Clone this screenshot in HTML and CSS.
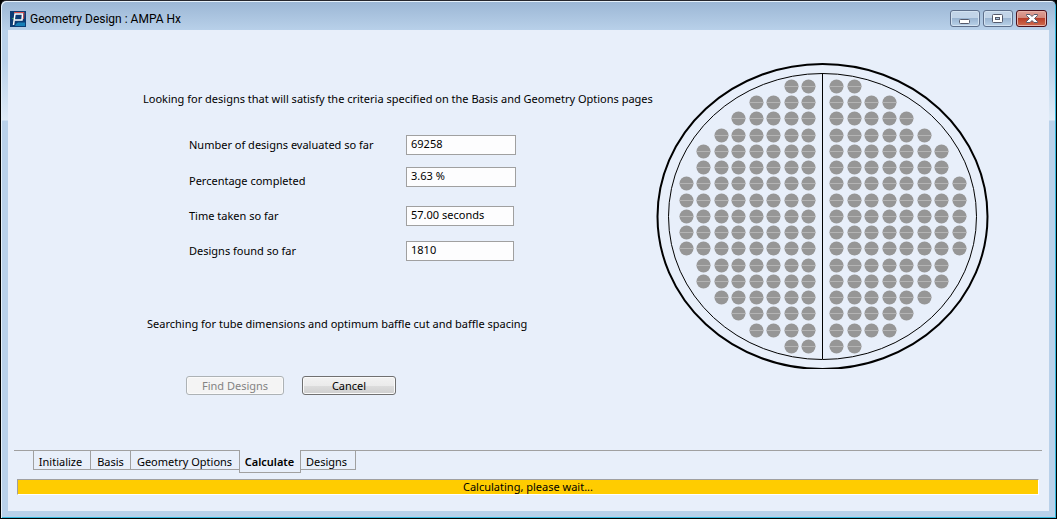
FILE: index.html
```html
<!DOCTYPE html>
<html lang="en">
<head>
<meta charset="utf-8">
<title>Geometry Design : AMPA Hx</title>
<link rel="stylesheet" href="styles.css">
</head>
<body>
<div class="window">
  <header class="titlebar">
    <svg class="logo" width="16" height="16" viewBox="0 0 16 16" aria-hidden="true">
      <rect width="16" height="16" fill="#0c3c74"/>
      <path d="M6 13L8 11.500H15V15H5Z" fill="#1780b8"/>
      <path d="M2 7.500H5" stroke="#2f9f62" stroke-width="1"/>
      <path d="M3.500 14L5 3H12.500L12 9H5" fill="none" stroke="#fff" stroke-width="1.500"/>
      <path d="M4 1.500H14L13.500 8" fill="none" stroke="#d8504c" stroke-width="1"/>
    </svg>
    <h1 class="title">Geometry Design : AMPA Hx</h1>
    <div class="controls">
      <button class="control" aria-label="Minimize">
        <svg width="12" height="12" viewBox="0 0 12 12"><rect x=".5" y="6.500" width="10" height="4" rx="1" fill="#fff" stroke="#555a6c"/></svg>
      </button>
      <button class="control" aria-label="Maximize">
        <svg width="12" height="12" viewBox="0 0 12 12"><rect x=".5" y="1.500" width="10" height="8" rx="1" fill="#fff" stroke="#555a6c"/><rect x="3.500" y="4.500" width="4" height="2" fill="#a8c3dd" stroke="#555a6c"/></svg>
      </button>
      <button class="control control-close" aria-label="Close">
        <svg width="12" height="12" viewBox="0 0 12 12"><path d="M.5 1.500H4L6 3.500 8 1.500H11.500V2.500L8.500 5.500 11.500 8.500V9.500H8L6 7.500 4 9.500H.5V8.500L3.500 5.500.5 2.500Z" fill="#fff" stroke="#555a6c"/></svg>
      </button>
    </div>
  </header>

  <main class="page">
    <div class="content">
      <form class="progress-form">
        <p class="intro">Looking for designs that will satisfy the criteria specified on the Basis and Geometry Options pages</p>
        <div class="fields">
          <div class="field"><label for="evaluated">Number of designs evaluated so far</label><input id="evaluated" value="69258" readonly></div>
          <div class="field field-low"><label for="percent">Percentage completed</label><input id="percent" value="3.63 %" readonly></div>
          <div class="field field-short"><label for="time">Time taken so far</label><input id="time" value="57.00 seconds" readonly></div>
          <div class="field field-short"><label for="found">Designs found so far</label><input id="found" value="1810" readonly></div>
        </div>
        <p class="searching">Searching for tube dimensions and optimum baffle cut and baffle spacing</p>
        <div class="actions">
          <button type="button" class="button button-find" disabled>Find Designs</button>
          <button type="button" class="button">Cancel</button>
        </div>
      </form>
      <svg class="tubesheet" width="333" height="307" viewBox="656 62 333 307" role="img" aria-label="Tube layout">
        <ellipse cx="822.5" cy="216.500" rx="165" ry="152.500" fill="none" stroke="#000" stroke-width="2"/>
        <ellipse cx="822.5" cy="216.500" rx="154" ry="143" fill="none" stroke="#000"/>
        <path d="M822.5 73V359" stroke="#000"/>
        <g id="tubes"></g>
      </svg>
    </div>

    <nav class="tabs" aria-label="Pages">
      <button class="tab tab-initialize">Initialize</button>
      <button class="tab tab-basis">Basis</button>
      <button class="tab tab-geometry">Geometry Options</button>
      <button class="tab tab-active" aria-current="page">Calculate</button>
      <button class="tab tab-designs">Designs</button>
    </nav>
    <div class="status" role="status">Calculating, please wait...</div>
  </main>
</div>
<script src="tubes.js"></script>
</body>
</html>
```
FILE: tubes.js
```
// Tubes per row on each side of the pass partition, top to bottom.
const rows = [2, 4, 5, 6, 7, 7, 8, 8, 8, 8, 8, 7, 7, 6, 5, 4, 2];
const group = document.getElementById("tubes");
const ns = "http://www.w3.org/2000/svg";

function add(name, attributes) {
  const node = document.createElementNS(ns, name);
  for (const key in attributes) node.setAttribute(key, attributes[key]);
  group.appendChild(node);
}

function tube(x, y) {
  add("circle", { cx: x, cy: y, r: 7, fill: "#969696" });
  add("path", { d: `M${x - 7} ${y}h14`, stroke: "#b4b4b4" });
}

rows.forEach((count, row) => {
  const y = Math.floor(86.25 + row * 16.25) + 0.5;
  for (let i = 0; i < count; i++) {
    tube(Math.floor(808.5 - i * 17.5) + 0.5, y);
    tube(Math.floor(836.5 + i * 17.5) + 0.5, y);
  }
});
```
FILE: styles.css
```css
* { box-sizing: border-box; }

body {
  margin: 0;
  background: #000;
  color: #000;
  font: 11px/20px "Noto Sans", "Open Sans", sans-serif;
}

h1, p { margin: 0; }
button, input { font: inherit; color: inherit; }

.window {
  display: flex;
  flex-direction: column;
  min-height: 100vh;
  padding: 0 7px 7px 6px;
  border: 1px solid #000;
  border-top-color: #26262c;
  border-radius: 6px 6px 0 0;
  background: linear-gradient(#9bb6d4, #b9d1ea 30px, #b9d1ea 60px, #dfebf7 119px, #b9d1ea 120px);
  box-shadow: inset 1px 1px #e6f1fa, inset -1px -1px #34b8dc;
}

.titlebar {
  display: flex;
  align-items: center;
  height: 29px;
  padding: 5px 2px 0 3px;
}
.logo { margin-top: 1px; }
.title {
  flex: 1;
  padding: 1px 0 0 4px;
  font-family: Roboto, "Noto Sans", sans-serif;
  font-size: 12px;
  font-weight: 400;
}
.controls { display: flex; gap: 3px; }
.control {
  display: flex;
  align-items: center;
  justify-content: center;
  width: 30px;
  height: 17px;
  padding: 2px 0 0;
  border: 1px solid #5e6f8b;
  border-radius: 3px;
  background: linear-gradient(#c2d4e8 50%, #9bb5d2 50%, #b9d1e8);
  box-shadow: inset 0 0 0 1px #d3e2f1;
}
.control-close {
  width: 31px;
  border-color: #4c101b;
  background: linear-gradient(#dfa198, #d08578 50%, #b93e29 50%, #cf6d4f);
  box-shadow: inset 0 0 0 1px #e7b2a8;
}

.page {
  display: flex;
  flex: 1;
  flex-direction: column;
  padding: 0 7px 16px 6px;
  background: #e8effa;
  margin-left: 1px;
}
.content {
  display: flex;
  flex: 1;
  justify-content: space-between;
  padding: 32px 53px 0 129px;
}
.tubesheet { flex: none; }

.intro { margin-top: 27px; white-space: nowrap; }
.fields { padding: 26px 0 0 46px; }
.field {
  display: grid;
  grid-template-columns: 217px 110px;
  align-items: start;
  height: 32px;
}
.field-low { height: 39px; }
.field-low label { padding-top: 4px; }
.field-short { grid-template-columns: 217px 108px; height: 35px; }
.field input {
  width: 100%;
  height: 20px;
  padding: 0 4px 3px;
  border: 1px solid #a0a0a0;
  background: #fdfdfe;
  line-height: 15px;
}
.searching { padding: 38px 0 0 4px; }
.actions { display: flex; gap: 18px; padding: 42px 0 0 43px; }
.button {
  width: 94px;
  height: 19px;
  padding: 0;
  border: 1px solid #707070;
  border-radius: 3px;
  background: linear-gradient(#f2f2f2, #ebebeb 50%, #dddddd 50%, #cfcfcf);
  box-shadow: inset 0 0 0 1px #fafafa;
  line-height: 16px;
}
.button-find {
  width: 98px;
  border-color: #adb2b5;
  background: #f4f4f4;
  color: #838383;
}

.tabs {
  display: flex;
  align-items: flex-start;
  height: 29px;
  padding-left: 19px;
  border-top: 1px solid #a0a0a0;
}
.tab {
  height: 19px;
  padding: 3px 3px 0 0;
  border: 1px solid #a0a0a0;
  border-width: 0 0 1px 1px;
  background: none;
  line-height: 15px;
  white-space: nowrap;
}
.tab-initialize { width: 57px; }
.tab-basis { width: 40px; padding-right: 0; }
.tab-geometry { width: 109px; padding-right: 1px; }
.tab-active {
  width: 62px;
  height: 23px;
  margin-top: -1px;
  padding: 0 1px 0 0;
  border-right-width: 1px;
  background: #e8effa;
  font-weight: 600;
}
.tab-designs { width: 55px; border-width: 0 1px 1px 0; }

.status {
  height: 16px;
  margin: 0 3px;
  border: 1px solid #a0a0a0;
  border-right-color: #fff;
  border-bottom-color: #fff;
  background: #ffcc00;
  line-height: 14px;
  text-align: center;
}
```
